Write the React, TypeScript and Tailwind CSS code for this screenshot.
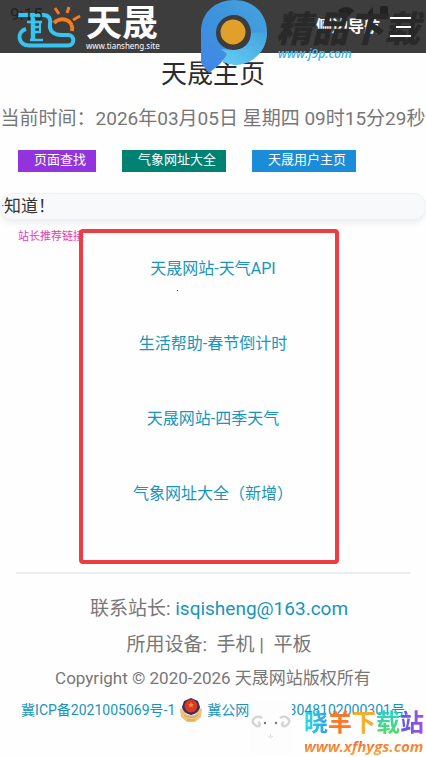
const shortcuts = [
  { title: "页面查找", color: "bg-[#9333dd]" },
  { title: "气象网址大全", color: "bg-[#008272]" },
  { title: "天晟用户主页", color: "bg-[#1a8cd8]" },
];

const recommended = [
  "天晟网站-天气API",
  "生活帮助-春节倒计时",
  "天晟网站-四季天气",
  "气象网址大全（新增）",
];

const Logo = () => (
  <svg viewBox="0 0 66 46" className="h-[46px] w-[66px]" fill="none" aria-hidden="true">
    <g stroke="#36c5f0" strokeLinejoin="round">
      <path d="M2 11H27C33 11 35 15 34 20C33 27 38 31 45 31H52C59 31 59 41.5 52 41.5H13C2 41.5 0 28 10 25" strokeWidth="4" />
      <path d="M17 11V37" strokeWidth="4.5" />
      <path d="M11 18H26M17 23H25M17 28H25M14 36H27" strokeWidth="2.5" />
      <path d="M24 18V29" strokeWidth="2" />
    </g>
    <path d="M38 19C44 12 58 15 56 27" stroke="#f47b20" strokeWidth="4" />
    <path d="M39 4L43 10M53 3L51 9M64 12L57 16" stroke="#f47b20" strokeWidth="3" />
  </svg>
);

const Header = () => (
  <header className="relative flex h-[53px] items-center justify-between bg-[#3d3d3d] pl-4 pr-3.5">
    <a href="#home" className="flex items-center gap-1 text-white">
      <Logo />
      <span className="flex flex-col pt-1">
        <span className="text-4xl/[34px] font-bold">天晟</span>
        <span className="font-['Noto_Sans',sans-serif] text-[8px]/[10px]">www.tiansheng.site</span>
      </span>
    </a>
    <button type="button" className="flex items-center gap-2.5 text-base font-bold text-white">
      侧边导航
      <svg viewBox="0 0 22 20" className="relative z-10 h-5 w-[22px]" stroke="currentColor" strokeWidth="2" aria-hidden="true">
        <path d="M0 1H21M6 10H21M0 19H21" />
      </svg>
    </button>
    <span className="absolute left-2.5 top-1 text-[17px]/[20px] text-[#222]">9:15</span>
  </header>
);

const StatusIcons = () => (
  <svg viewBox="0 0 60 16" className="absolute right-8 top-1.5 h-4 w-[60px]" fill="#222" aria-hidden="true">
    <path d="M4 5C8 0 16 0 20 5L12 12Z" />
    <path d="M34 9V6L39 1V9Z" />
    <rect x="46" y="0" width="8" height="12" rx="2" />
  </svg>
);

const TopWatermark = () => (
  <div className="pointer-events-none absolute right-0 top-0 flex w-[226px]">
    <svg viewBox="0 0 68 74" className="h-[74px] w-[68px] shrink-0" aria-hidden="true">
      <defs>
        <linearGradient id="ring" x1="0" y1="1" x2="1" y2="0">
          <stop offset="0" stopColor="#4285e8" />
          <stop offset="0.5" stopColor="#3c94dd" />
          <stop offset="1" stopColor="#48a4df" />
        </linearGradient>
        <linearGradient id="tail" x1="0" y1="1" x2="1" y2="0">
          <stop offset="0" stopColor="#65cef7" />
          <stop offset="1" stopColor="#43a2dd" />
        </linearGradient>
      </defs>
      <path
        d="M1 32C1 12 16 0 34 0C53 0 67 13 67 32C67 51 53 64 34 64C29 64 25 63 23 60L20 64L9 73L1 63ZM34 15C24 15 16 23 16 33C16 43 24 50 34 50C44 50 51 43 51 33C51 23 44 15 34 15Z"
        fill="url(#ring)"
        fillRule="evenodd"
      />
      <path d="M21 49L32 50C42 51 51 44 51 33L67 32C67 51 53 65 34 65L22 62L27 54Z" fill="url(#tail)" />
      <circle cx="33" cy="32" r="12.5" fill="#e1a02a" />
    </svg>
    <div className="flex flex-col pt-3">
      <span className="whitespace-nowrap pl-2 text-4xl/[36px] font-black italic text-[#292929]">精品下载</span>
      <span className="pl-2.5 font-['Open_Sans',sans-serif] text-xs/[12px] font-semibold italic text-[#41b6ef]">www.j9p.com</span>
    </div>
  </div>
);

const Badge = () => (
  <svg viewBox="0 0 24 24" className="size-6 shrink-0" aria-hidden="true">
    <path d="M1 11L5 10L8 17H16L19 10L23 11L22 19L16 24H8L2 19Z" fill="#ecc27c" />
    <path d="M5 3L12 0L19 3L21 9C20 13 17 16 12 17C7 16 4 13 3 9Z" fill="#35315c" />
    <circle cx="12" cy="8" r="6.5" fill="#df3526" />
    <path d="M12 4L13 6H15L13.5 7.5L14 9.5L12 8.5L10 9.5L10.5 7.5L9 6H11Z" fill="#f08a3a" />
    <path d="M5 17C9 20 15 20 19 17M8 22H16" stroke="#d9a050" fill="none" />
  </svg>
);

const BottomWatermark = () => (
  <div className="pointer-events-none absolute bottom-0 right-0 flex items-start">
    <svg viewBox="0 0 46 56" className="h-[56px] w-[46px]" fill="none" aria-hidden="true">
      <rect width="42" height="56" rx="6" fill="#fdfdfd" />
      <path d="M12 19C6 15 -1 22 5 26C9 29 12 25 8 23M30 19C36 15 43 22 37 26C33 29 30 25 34 23" stroke="#d9d6d1" strokeWidth="2.5" />
      <circle cx="15" cy="24" r="1.2" fill="#777" />
      <circle cx="26" cy="24" r="1.2" fill="#777" />
      <path d="M18 37L20.5 39L23 37M20.5 35V38" stroke="#ddd" />
    </svg>
    <div className="flex flex-col pb-0.5 pl-2 pr-0.5 pt-2.5">
      <span className="text-2xl/[28px] font-bold">
        <span className="bg-gradient-to-r from-[#19e3e6] to-[#329ae8] bg-clip-text text-transparent">晓</span>
        <span className="text-[#ff7624]">羊</span>
        <span className="text-[#f7ae25]">下</span>
        <span className="bg-gradient-to-b from-[#27cfcf] to-[#55dd45] bg-clip-text text-transparent">载</span>
        <span className="bg-gradient-to-r from-[#5a58e8] to-[#9a50e8] bg-clip-text text-transparent">站</span>
      </span>
      <span className="bg-gradient-to-b from-[#f04b38] to-[#ffa62d] bg-clip-text font-['Open_Sans',sans-serif] text-[15px]/[18px] font-bold italic text-transparent">
        www.xfhygs.com
      </span>
    </div>
  </div>
);

export default function App() {
  return (
    <div className="relative min-h-screen overflow-hidden bg-[#fefefe] font-[Roboto,'Noto_Sans_CJK_SC',sans-serif] text-[#777]">
      <Header />
      <main>
        <h1 className="pt-0.5 text-center text-[26px]/[38px] text-[#2b2b2b]">天晟主页</h1>
        <p className="mt-3 whitespace-nowrap text-center text-[19px]/[28px]">
          当前时间：2026年03月05日 星期四 09时15分29秒
        </p>
        <nav className="mt-[17px] flex gap-[26px] px-[18px]">
          {shortcuts.map((item) => (
            <a
              key={item.title}
              href="#"
              className={`h-[22px] whitespace-nowrap pl-4 pr-2.5 text-[13px]/[19px] text-white ${item.color}`}
            >
              {item.title}
            </a>
          ))}
        </nav>
        <div className="mt-[21px] h-[27px] overflow-hidden rounded-xl border border-[#eff1f4] bg-[#f8f9fb] text-[17px]/[25px] text-[#333] shadow-md shadow-gray-200/60">
          <span className="flex">
            <span className="w-[3px] overflow-hidden text-right text-[10px]">·</span>知道！
          </span>
        </div>

        <section className="relative mx-4 border-b-2 border-[#ededf0] px-0.5 pb-[66px]">
          <h2 className="pt-2 text-[11px]/[18px] text-[#e73caf]">站长推荐链接</h2>
          <ul className="flex flex-col items-center gap-[51px] pt-[11px] text-base/[24px] text-[#1795bd]">
            {recommended.map((title) => (
              <li key={title}>
                <a href="#">{title}</a>
              </li>
            ))}
          </ul>
          {/* Highlight frame */}
          <div className="pointer-events-none absolute bottom-2 left-1/2 top-[9px] w-[260px] -translate-x-[134px] rounded border-4 border-[#ee3d42]" />
          <span className="absolute left-[161px] top-[70px] size-px bg-[#a32050]" />
        </section>
      </main>

      <footer className="flex flex-col items-center pb-8 pt-5 text-center">
        <p className="pl-3 text-[19px]/[30px]">
          联系站长: <a href="mailto:isqisheng@163.com" className="text-[#1795bd]">isqisheng@163.com</a>
        </p>
        <p className="mt-1.5 whitespace-pre pl-3 text-[19px]/[30px]">所用设备:  手机 |  平板</p>
        <p className="mt-1.5 text-[17px]/[24px]">Copyright © 2020-2026 天晟网站版权所有</p>
        <div className="mt-2 flex items-center gap-1 whitespace-nowrap text-sm/[24px] text-[#1795bd]">
          <a href="#">冀ICP备2021005069号-1</a>
          <Badge />
          <a href="#">冀公网安备 13048102000301号</a>
        </div>
      </footer>

      <StatusIcons />
      <TopWatermark />
      <BottomWatermark />
    </div>
  );
}
